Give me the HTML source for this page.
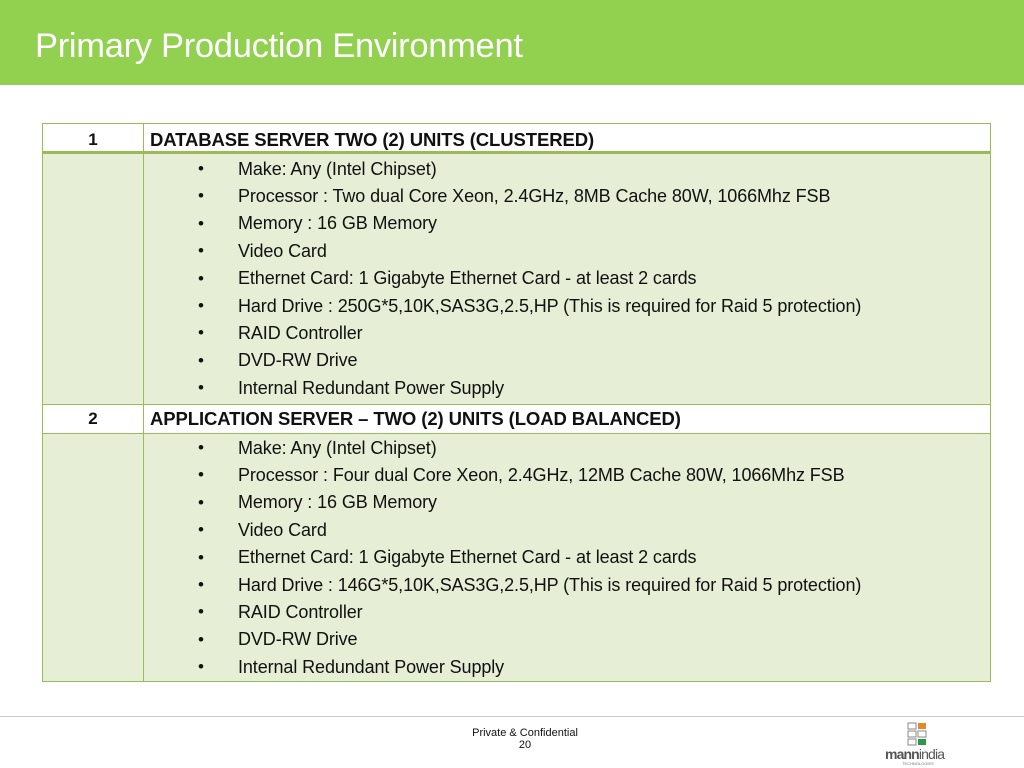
<!DOCTYPE html>
<html><head><meta charset="utf-8"><style>
*{margin:0;padding:0;box-sizing:border-box}
body{width:1024px;height:768px;background:#fff;position:relative;overflow:hidden;font-family:"Liberation Sans",sans-serif;color:#111}
.hdr{position:absolute;left:0;top:0;width:1024px;height:85px;background:#92d050}
.hdr h1{position:absolute;left:35px;top:27px;font-weight:normal;font-size:34.5px;color:#fff;letter-spacing:-0.3px}
.tbl{position:absolute;left:42px;top:123px;width:949px;height:559px;border:1px solid #9bbb59;background:#e6eed5}
.row{position:absolute;left:0;width:947px;background:#fff}
.vl{position:absolute;left:100px;top:0;width:1px;height:557px;background:#9bbb59}
.num{position:absolute;left:0;width:100px;text-align:center;font-weight:bold;font-size:17px}
.ttl{position:absolute;left:107px;font-weight:bold;font-size:18.5px;letter-spacing:-0.1px}
.li{position:absolute;left:238px;font-size:18px;white-space:nowrap;letter-spacing:-0.1px}
.b{position:absolute;left:198px;font-size:17px}
.foot{position:absolute;left:0;top:716px;width:1024px;height:1px;background:#ccc}
.ft{position:absolute;left:425px;width:200px;text-align:center;font-size:11px}
</style></head><body>
<div class="hdr"><h1>Primary Production Environment</h1></div>
<div class="tbl">
<div class="row" style="top:0;height:30px;border-bottom:3px solid #9bbb59"></div>
<div class="row" style="top:280px;height:30px;border-top:1px solid #9bbb59;border-bottom:1px solid #9bbb59"></div>
<div class="vl"></div>
<div class="num" style="top:6px">1</div>
<div class="ttl" style="top:5px">DATABASE SERVER TWO (2) UNITS (CLUSTERED)</div>
<div class="num" style="top:285px">2</div>
<div class="ttl" style="top:284px">APPLICATION SERVER – TWO (2) UNITS (LOAD BALANCED)</div>
</div>
<div id="l"></div>
<script>
var a=["Make: Any (Intel Chipset)","Processor : Two dual Core Xeon, 2.4GHz, 8MB Cache 80W, 1066Mhz FSB","Memory : 16 GB Memory","Video Card","Ethernet Card: 1 Gigabyte Ethernet Card - at least 2 cards","Hard Drive : 250G*5,10K,SAS3G,2.5,HP (This is required for Raid 5 protection)","RAID Controller","DVD-RW Drive","Internal Redundant Power Supply"];
var b=a.slice();b[1]="Processor : Four dual Core Xeon, 2.4GHz, 12MB Cache 80W, 1066Mhz FSB";b[5]="Hard Drive : 146G*5,10K,SAS3G,2.5,HP (This is required for Raid 5 protection)";
var h="";
function add(arr,y0){for(var i=0;i<arr.length;i++){var y=y0+i*27.4;h+='<div class="b" style="top:'+(y+42)+'px">•</div><div class="li" style="top:'+(y+41.5)+'px">'+arr[i]+'</div>';}}
add(a,117);add(b,396);
document.getElementById('l').innerHTML=h;
</script>
<div class="foot"></div>
<div class="ft" style="top:727px">Private &amp; Confidential</div>
<div class="ft" style="top:739px">20</div>
<svg style="position:absolute;left:884px;top:720px" width="64" height="46">
<rect x="24" y="3" width="8" height="6" fill="none" stroke="#888"/><rect x="34" y="3" width="8" height="6" fill="#e38b2c"/>
<rect x="24" y="11" width="8" height="6" fill="none" stroke="#888"/><rect x="34" y="11" width="8" height="6" fill="none" stroke="#888"/>
<rect x="24" y="19" width="8" height="6" fill="none" stroke="#888"/><rect x="34" y="19" width="8" height="6" fill="#2a9a4a"/>
<text x="1" y="39" font-family="Liberation Sans" font-size="14" font-weight="bold" fill="#555" textLength="60">mann<tspan font-weight="normal">india</tspan></text>
<text x="18" y="45" font-family="Liberation Sans" font-size="4" fill="#777">TECHNOLOGIES</text>
</svg>
</body></html>
